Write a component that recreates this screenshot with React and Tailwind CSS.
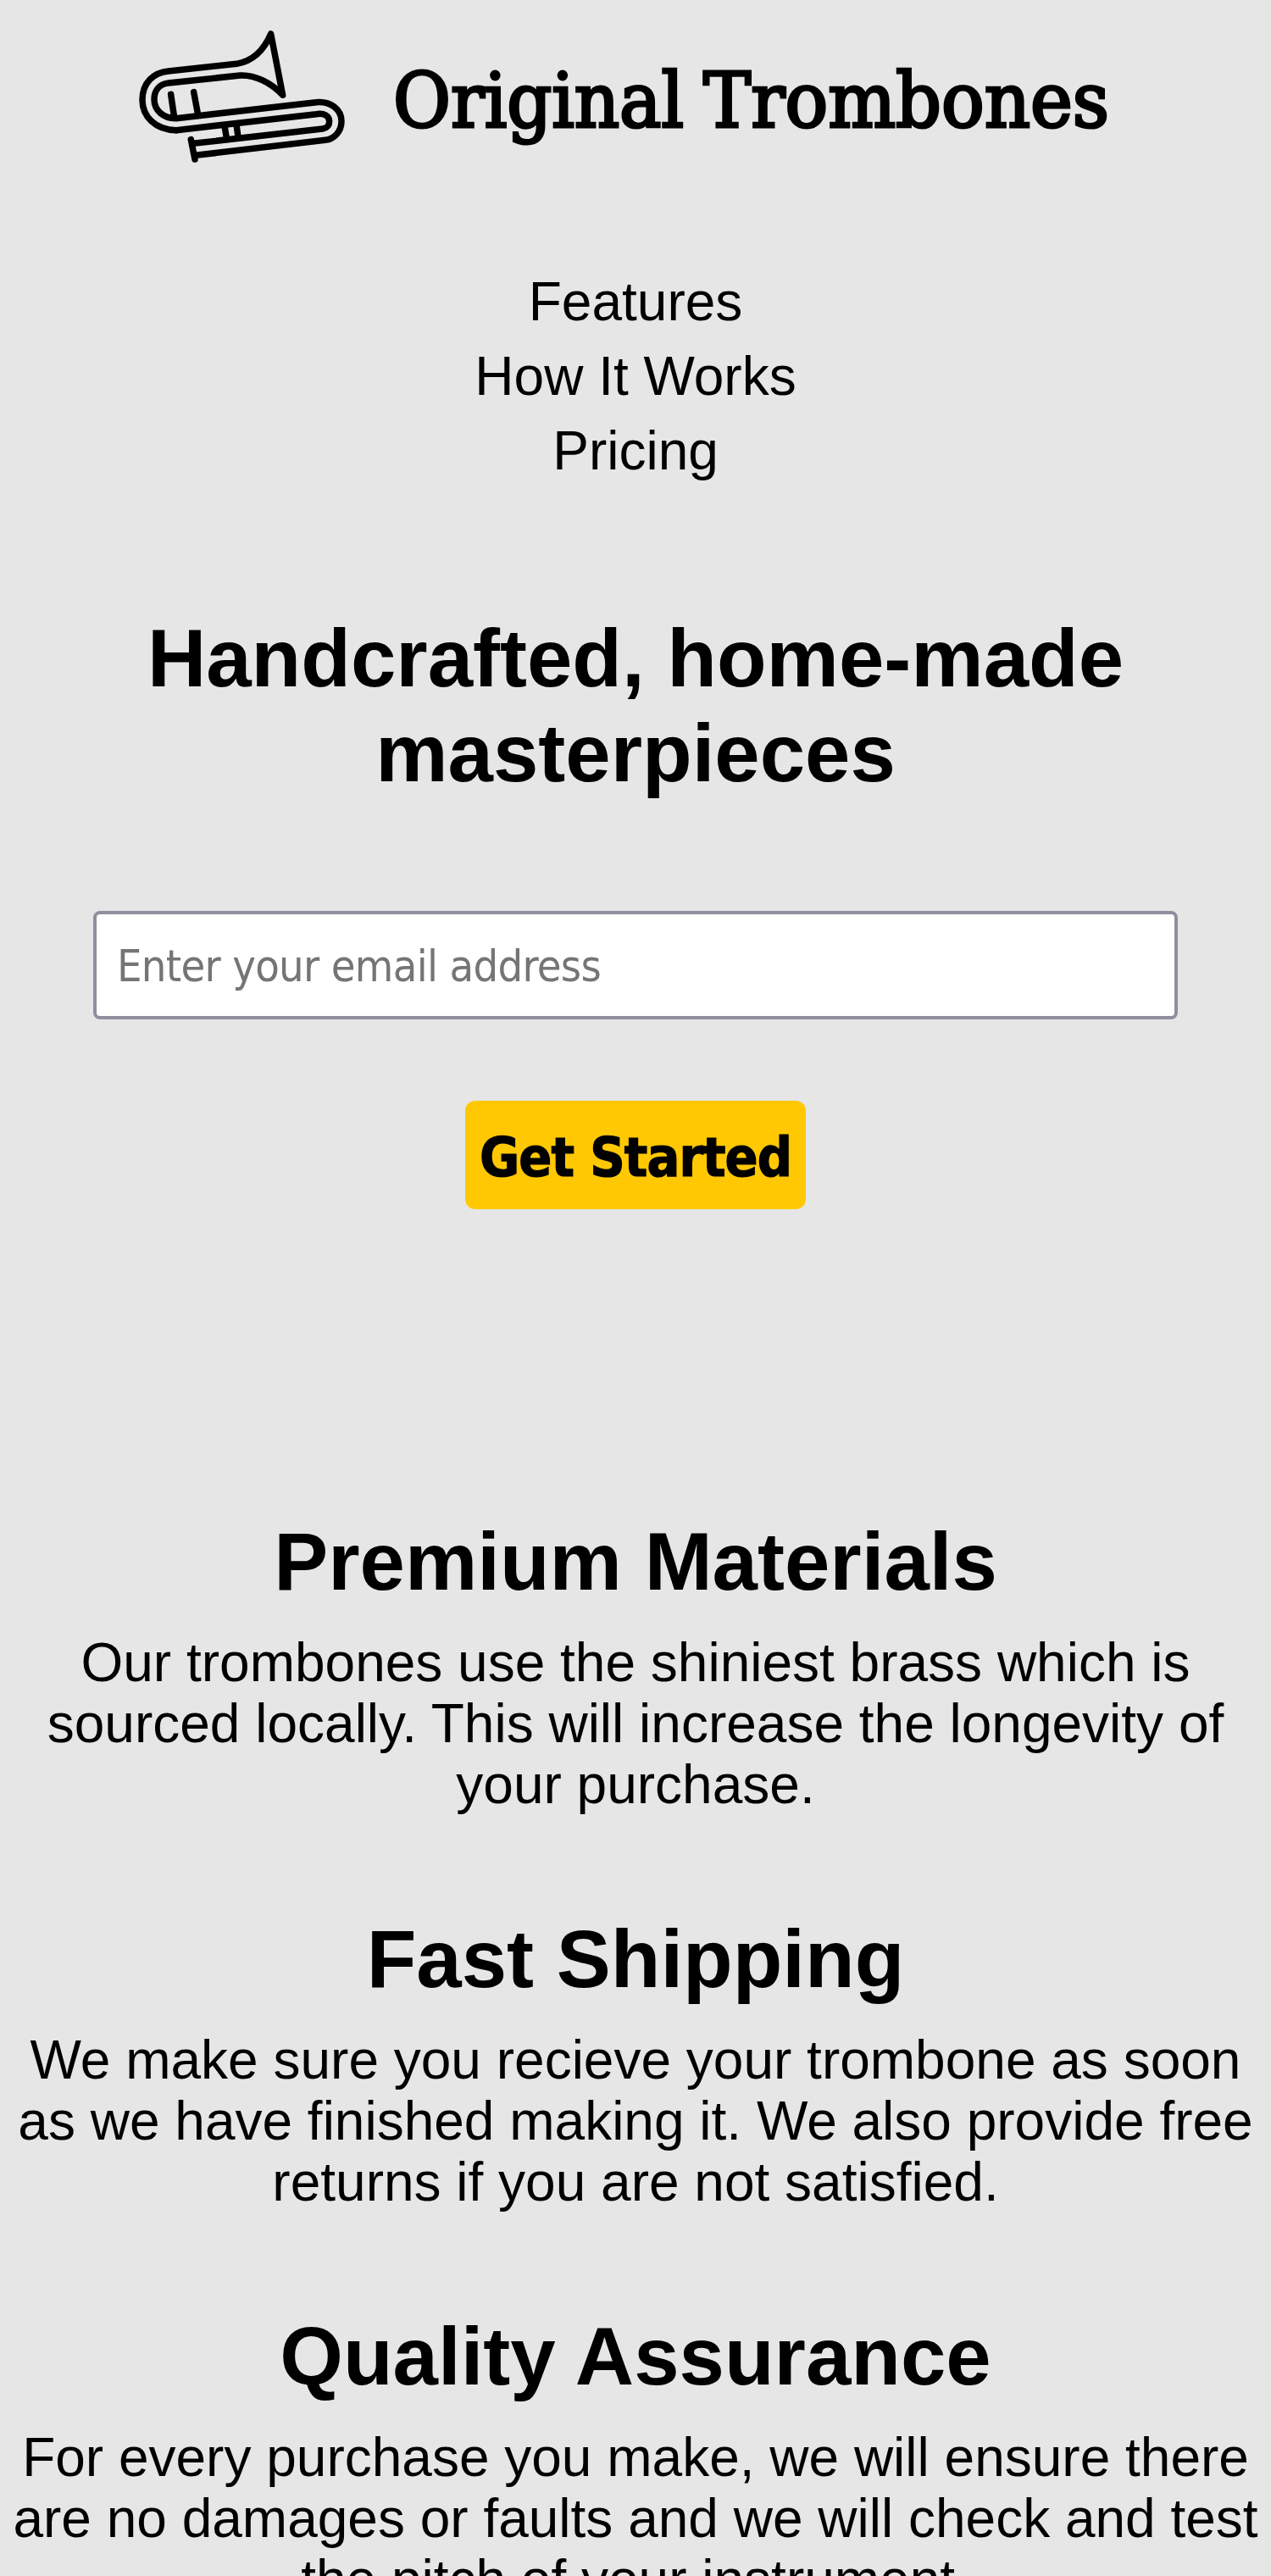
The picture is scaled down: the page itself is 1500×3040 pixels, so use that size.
const sections = [
  {
    title: "Premium Materials",
    lines: ["Our trombones use the shiniest brass which is", "sourced locally. This will increase the longevity of", "your purchase."],
  },
  {
    title: "Fast Shipping",
    lines: ["We make sure you recieve your trombone as soon", "as we have finished making it. We also provide free", "returns if you are not satisfied."],
  },
  {
    title: "Quality Assurance",
    lines: ["For every purchase you make, we will ensure there", "are no damages or faults and we will check and test", "the pitch of your instrument."],
  },
];

function Logo() {
  return (
    <svg width="1180" height="190" viewBox="140 20 1180 190" role="img" aria-label="Original Trombones">
      <g transform="translate(140 20) scale(0.33333)" fill="none" stroke="#000" strokeWidth="22.5" strokeLinecap="round" strokeLinejoin="round">
        <path d="M204 401 C130 401 84 352 84 294 C84 232 124 197 176 192 L418 166 C466 158 510 128 539 60 L581 277 C540 232 480 204 430 207 L176 234 C143 238 126 262 126 292 C126 330 158 360 204 359 L700 302 C750 297 789 328 789 369 C789 407 762 433 732 436 L272 490" />
        <path d="M204 401 L700 344 C728 340 746 350 746 370 C746 386 738 393 722 396 L264 448" />
        <path d="M185 274 L197 356 M266 266 L281 346 M375 386 L382 428 M417 382 L423 424 M256 434 L270 504" />
      </g>
      <g fontFamily="'DejaVu Serif Condensed', 'DejaVu Serif', serif" fontSize="90" fill="#000" stroke="#000" strokeWidth="3.2">
        <text x="464" y="149.500" textLength="343" lengthAdjust="spacingAndGlyphs">Original</text>
        <text x="830" y="149.500" textLength="479" lengthAdjust="spacingAndGlyphs">Trombones</text>
      </g>
    </svg>
  );
}

export default function App() {
  return (
    <div className="h-[3040px] w-[1500px] overflow-hidden bg-[#e6e6e6] font-['Liberation_Sans',Arial,sans-serif] text-[64px] text-black">
      <header className="flex flex-col items-start">
        <div className="h-[210px] pt-5 pl-[140px]">
          <Logo />
        </div>
        <nav className="mt-[102px] flex w-full flex-col items-center leading-[88px]">
          <a href="#features">Features</a>
          <a href="#how">How It Works</a>
          <a href="#pricing">Pricing</a>
        </nav>
      </header>
      <main>
        <form className="mt-[145px] flex flex-col items-center" onSubmit={(e) => e.preventDefault()}>
          <h1 className="text-center text-[96px] leading-[112px] font-bold">
            Handcrafted, home-made
            <br />
            masterpieces
          </h1>
          <input
            type="email"
            placeholder="Enter your email address"
            className="mt-[130px] h-[128px] w-[1280px] rounded-lg border-4 border-[#8f8f9d] bg-white px-6 pt-0.5 font-['DejaVu_Sans_Condensed','DejaVu_Sans',sans-serif] text-[52px] tracking-[-0.7px] placeholder:text-[#757575]"
          />
          <button className="mt-24 h-[128px] w-[402px] rounded-xl bg-[#ffc803] pt-1.5 font-['DejaVu_Sans_Condensed','DejaVu_Sans',sans-serif] text-[64px] font-bold tracking-[-0.9px] whitespace-nowrap [-webkit-text-stroke:1.2px_black]">
            Get Started
          </button>
        </form>
        <div className="mt-[360px] flex flex-col gap-[114px]">
          {sections.map((s) => (
            <section key={s.title} className="text-center whitespace-nowrap">
              <h2 className="text-[96px] leading-[112px] font-bold">{s.title}</h2>
              <p className="mt-[27px] leading-[72px]">
                {s.lines.map((line) => (
                  <span key={line} className="block">
                    {line}
                  </span>
                ))}
              </p>
            </section>
          ))}
        </div>
      </main>
    </div>
  );
}
